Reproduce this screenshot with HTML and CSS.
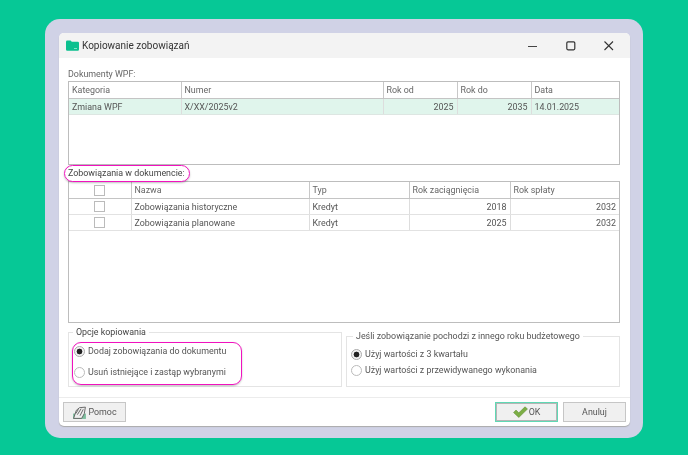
FILE: index.html
```html
<!DOCTYPE html>
<html lang="pl">
<head>
<meta charset="utf-8">
<title>Kopiowanie zobowiązań</title>
<link rel="stylesheet" href="styles.css">
</head>
<body>
<div class="panel">
  <div class="window">
    <header class="titlebar">
      <svg class="app-icon" viewBox="0 0 13 11" width="13" height="11"><path d="M0 2 Q0 .6 1.2 .6 H4.6 L5.8 1.8 H11.8 Q13 1.8 13 3 V9.6 Q13 10.8 11.8 10.8 H1.2 Q0 10.8 0 9.6Z" fill="#0cc08f"/><path d="M8 8.5h3" stroke="#7fe3c6" stroke-width="1"/></svg>
      <span class="title">Kopiowanie zobowiązań</span>
      <div class="controls">
        <svg viewBox="0 0 12 12" width="12" height="12"><path d="M1 6.500h9" stroke="#444" stroke-width="1.200"/></svg>
        <svg viewBox="0 0 12 12" width="12" height="12"><rect x="1.800" y="1.800" width="8" height="8" rx="1.200" fill="none" stroke="#333" stroke-width="1.200"/></svg>
        <svg viewBox="0 0 12 12" width="12" height="12"><path d="M1.500 1.500l8.500 8.500M10 1.500l-8.500 8.500" stroke="#333" stroke-width="1.100"/></svg>
      </div>
    </header>
    <main class="content">
      <div class="label">Dokumenty WPF:</div>
      <div class="grid-box docs">
        <table>
          <colgroup><col class="d1"><col class="d2"><col class="d3"><col class="d4"><col></colgroup>
          <thead><tr><th>Kategoria</th><th>Numer</th><th>Rok od</th><th>Rok do</th><th>Data</th></tr></thead>
          <tbody><tr class="selected"><td>Zmiana WPF</td><td>X/XX/2025v2</td><td class="num">2025</td><td class="num">2035</td><td>14.01.2025</td></tr></tbody>
        </table>
      </div>
      <div class="label second">Zobowiązania w dokumencie:<span class="mark mark-label"></span></div>
      <div class="grid-box obligations">
        <table>
          <colgroup><col class="o1"><col class="o2"><col class="o3"><col class="o4"><col></colgroup>
          <thead><tr><th class="chk"><span class="box"></span></th><th>Nazwa</th><th>Typ</th><th>Rok zaciągnięcia</th><th>Rok spłaty</th></tr></thead>
          <tbody>
            <tr><td class="chk"><span class="box"></span></td><td>Zobowiązania historyczne</td><td>Kredyt</td><td class="num">2018</td><td class="num">2032</td></tr>
            <tr><td class="chk"><span class="box"></span></td><td>Zobowiązania planowane</td><td>Kredyt</td><td class="num">2025</td><td class="num">2032</td></tr>
          </tbody>
        </table>
      </div>
      <div class="groups">
        <fieldset class="group left">
          <legend>Opcje kopiowania</legend>
          <div class="radio r1"><span class="dot on"></span>Dodaj zobowiązania do dokumentu</div>
          <div class="radio r2"><span class="dot"></span>Usuń istniejące i zastąp wybranymi</div>
          <span class="mark mark-radios"></span>
        </fieldset>
        <fieldset class="group right">
          <legend>Jeśli zobowiązanie pochodzi z innego roku budżetowego</legend>
          <div class="radio r3"><span class="dot on"></span>Użyj wartości z 3 kwartału</div>
          <div class="radio r4"><span class="dot"></span>Użyj wartości z przewidywanego wykonania</div>
        </fieldset>
      </div>
    </main>
    <footer class="footer">
      <button class="btn help">
        <svg viewBox="0 0 14 14" width="15" height="15"><rect x="1" y="8" width="12" height="5" fill="#7fbf9f"/><path d="M1.500 12.500L4 5 7 2.500 12.500 2 11.500 8 9 12.500Z" fill="#eee" stroke="#555" stroke-width=".8"/><path d="M5 9L8.500 3.500M7.500 10L10.500 4M3.500 8L6 4" stroke="#555" stroke-width=".8"/></svg>
        Pomoc</button>
      <div class="actions">
        <button class="btn ok">
          <svg viewBox="0 0 15 12" width="15" height="12"><path d="M.5 6.500L3 4 5.800 6.800 12 .8 14.500 3 5.800 11.500Z" fill="#7cae45" stroke="#5c8a33" stroke-width=".5"/></svg>
          OK</button>
        <button class="btn">Anuluj</button>
      </div>
    </footer>
  </div>
</div>
</body>
</html>
```

FILE: styles.css
```css
* { box-sizing: border-box; }
html, body { margin: 0; height: 100%; }
body {
  width: 688px;
  height: 455px;
  overflow: hidden;
  background: #06c896;
  font-family: Roboto, "Liberation Sans", sans-serif;
  font-size: 8.900px;
  color: #555;
  padding: 19px 45px 17px;
}
.panel {
  width: 598px;
  height: 419px;
  background: #d0d2e6;
  border-radius: 15px;
  padding: 14px 13px 12px 14px;
}
.window {
  height: 393px;
  background: #fff;
  border-radius: 5px;
  box-shadow: 0 1px 1px #aaa;
  display: flex;
  flex-direction: column;
  overflow: hidden;
  filter: blur(.35px);
}
.titlebar {
  height: 25px;
  flex: none;
  background: #f3f3f3;
  display: flex;
  align-items: center;
  padding-left: 7px;
}
.app-icon { margin-right: 3px; }
.title { font-size: 10px; color: #333; }
.controls {
  margin-left: auto;
  display: flex;
  gap: 26px;
  padding-right: 14px;
  margin-right: 1px;
}
.content {
  flex: 1;
  padding: 9px 10px 0 9px;
  display: flex;
  flex-direction: column;
}
.label { height: 14px; line-height: 14px; color: #666; }
.label.second {
  margin-top: 2px;
  line-height: 13px;
  color: #444;
  position: relative;
  width: fit-content;
}
.grid-box {
  border: 1.500px solid #bdbdbd;
  background: #fff;
  overflow: hidden;
}
.docs { height: 84px; }
.obligations { height: 142px; }
table {
  width: 100%;
  table-layout: fixed;
  border-collapse: collapse;
}
.d1 { width: 112px; }
.d2 { width: 202px; }
.d3 { width: 74px; }
.d4 { width: 74px; }
.o1 { width: 62px; }
.o2 { width: 178px; }
.o3 { width: 100px; }
.o4 { width: 101px; }
th, td {
  height: 16px;
  padding: 0 3px 0 3px;
  font-weight: 400;
  text-align: left;
  white-space: nowrap;
  overflow: hidden;
  border-right: 1px solid #ddd;
  border-bottom: 1px solid #e2e2e2;
  color: #555;
}
th {
  height: 16.500px;
  padding-bottom: 1px;
  color: #666;
  border-right-color: #c8c8c8;
  border-bottom: 1.500px solid #c4c4c4;
}
th:last-child, td:last-child { border-right: 0; }
.selected td { background: #e0f5ec; border-bottom-color: #dde6e2; }
.num { text-align: right; }
.chk { text-align: center; padding: 0; line-height: 0; }
.box {
  display: inline-block;
  width: 11px;
  height: 11px;
  border: 1px solid #bbb;
  background: #fff;
}
.groups {
  display: flex;
  align-items: flex-end;
  gap: 4px;
  margin-top: 4px;
}
.group {
  position: relative;
  margin: 0;
  min-width: 0;
  width: 274px;
  border: 1px solid #e4e4e4;
  padding: 0;
}
.group.left { height: 60px; }
.group.right { height: 56px; }
legend {
  padding: 0 3px;
  margin-left: 4px;
  line-height: 11px;
  color: #444;
}
.right legend { color: #555; margin-left: 6px; }
.radio {
  display: flex;
  align-items: center;
  height: 16px;
  line-height: 18px;
  color: #555;
  padding-left: 5px;
}
.r1 { margin-top: 5px; }
.r2 { margin-top: 5px; }
.r3 { margin-top: 4px; padding-left: 4px; }
.r4 { padding-left: 4px; }
.dot {
  width: 11px;
  height: 11px;
  margin-right: 3px;
  flex: none;
  border-radius: 50%;
  border: 1px solid #bbb;
  background: #fff;
}
.dot.on {
  border-color: #aaa;
  background: radial-gradient(circle, #222 0 2.600px, #f4f4f4 3.200px);
}
.mark {
  position: absolute;
  border: 1.500px solid #f012be;
  border-radius: 9px;
  box-shadow: 0 1px 2px rgba(0,0,0,.25);
  pointer-events: none;
}
.mark-label { left: -4px; top: -2px; width: 126px; height: 17px; }
.mark-radios { left: 3px; top: 4px; width: 170px; height: 43px; }
.footer {
  height: 29px;
  flex: none;
  border-top: 1px solid #ececec;
  display: flex;
  align-items: flex-start;
  justify-content: space-between;
  padding: 4px 4px 0 4px;
}
.actions { display: flex; gap: 5px; }
.btn {
  width: 63px;
  height: 20px;
  padding: 0;
  font: inherit;
  color: #555;
  background: #f0f0f0;
  border: 1.500px solid #c6c6c6;
  display: flex;
  align-items: center;
  justify-content: center;
  gap: 1px;
}
.ok { border: 1px solid #5fd8b4; box-shadow: inset 0 0 0 1px #b5b5b5; }
```
